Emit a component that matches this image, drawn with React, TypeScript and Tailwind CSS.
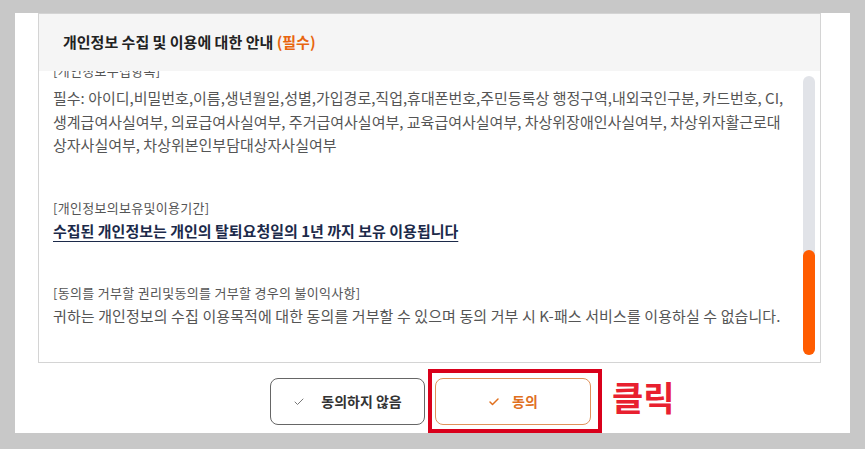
import { Check } from "lucide-react";

const font = "font-['Noto_Sans_CJK_KR','Noto_Sans',sans-serif]";

function Section({
  label,
  labelClass = "leading-[23px]",
  children,
}: {
  label: string;
  labelClass?: string;
  children: React.ReactNode;
}) {
  return (
    <div className="mb-[39px]">
      <p className={`text-[13px] tracking-[0.3px] text-[#555] ${labelClass}`}>{label}</p>
      {children}
    </div>
  );
}

export default function App() {
  return (
    <div className={`min-h-[449px] w-[865px] bg-[#c8c8c8] pt-[13px] ${font}`}>
      <div className="ml-[15px] w-[835px] bg-white px-[23px] pb-[8px]">
        {/* 약관 박스 */}
        <div className="w-[783px] border border-[#d4d4d4]">
          <div className="flex h-[57px] items-center bg-[#f5f5f5] pl-[24px] text-[15px] font-bold text-[#222]">
            개인정보 수집 및 이용에 대한 안내&nbsp;<span className="text-[#e8650f]">(필수)</span>
          </div>
          <div className="flex h-[291px]">
            <div className="flex-1 overflow-hidden pl-[14px]">
              <div className="-mt-[15px] whitespace-nowrap text-[15px] leading-[23.5px] text-[#555]">
                <Section label="[개인정보수집항목]" labelClass="leading-[30px]">
                  <p>필수: 아이디,비밀번호,이름,생년월일,성별,가입경로,직업,휴대폰번호,주민등록상 행정구역,내외국인구분, 카드번호, CI,</p>
                  <p>생계급여사실여부, 의료급여사실여부, 주거급여사실여부, 교육급여사실여부, 차상위장애인사실여부, 차상위자활근로대</p>
                  <p>상자사실여부, 차상위본인부담대상자사실여부</p>
                </Section>
                <Section label="[개인정보의보유및이용기간]">
                  <p className="font-bold text-[#1c2a4a] underline underline-offset-[4px]">
                    수집된 개인정보는 개인의 탈퇴요청일의 1년 까지 보유 이용됩니다
                  </p>
                </Section>
                <Section label="[동의를 거부할 권리및동의를 거부할 경우의 불이익사항]">
                  <p className="tracking-[0.1px]">귀하는 개인정보의 수집 이용목적에 대한 동의를 거부할 수 있으며 동의 거부 시 K-패스 서비스를 이용하실 수 없습니다.</p>
                </Section>
              </div>
            </div>
            {/* 스크롤바 */}
            <div className="mr-[5px] mt-[5px] mb-[7px] flex w-[12px] flex-col justify-end rounded-full bg-[#e1e3e8]">
              <div className="h-[105px] rounded-full bg-[#ff5c00]" />
            </div>
          </div>
        </div>

        {/* 버튼 */}
        <div className="mt-[15px] flex justify-center gap-[10px] pr-[4px]">
          <button className="flex h-[47px] w-[155px] items-center justify-center gap-[16px] rounded-[8px] border border-[#666] text-[14px] font-bold text-[#333]">
            <Check className="h-[12px] w-[12px] text-[#777]" strokeWidth={2} />
            동의하지 않음
          </button>
          <div className="relative">
            <button className="flex h-[47px] w-[156px] items-center justify-center gap-[12px] rounded-[8px] border border-[#e0925a] text-[14px] font-bold text-[#e0701e]">
              <Check className="h-[12px] w-[12px]" strokeWidth={3} />
              동의
            </button>
            <div className="absolute -left-[7px] -top-[9px] h-[64px] w-[174px] border-4 border-[#d9001b]" />
            <span className="absolute left-[177px] top-[2px] whitespace-nowrap text-[34px] font-bold leading-none text-[#e8202f]">클릭</span>
          </div>
        </div>
      </div>
    </div>
  );
}
